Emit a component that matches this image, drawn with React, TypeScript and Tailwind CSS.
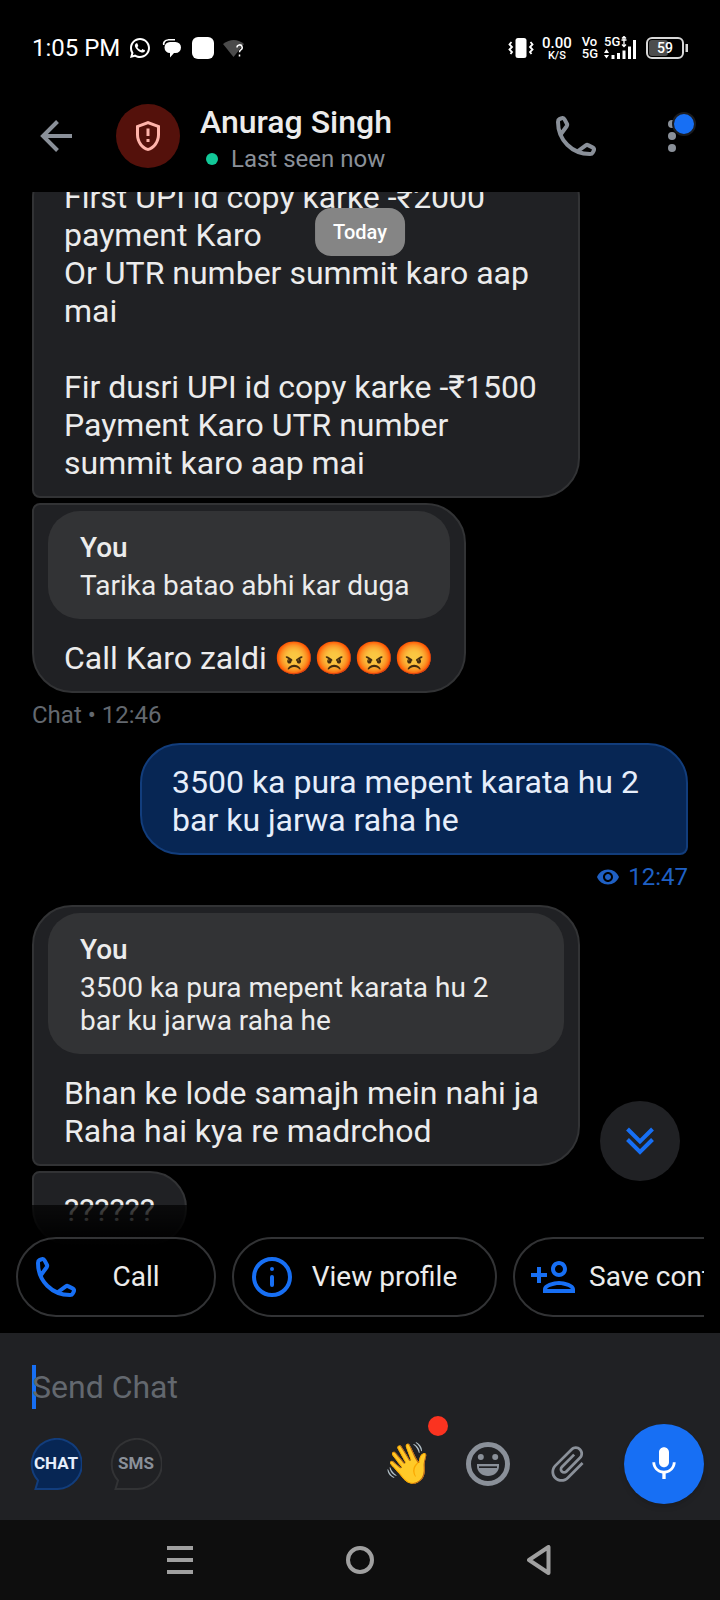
import { useState, type ReactNode } from 'react';
import { MdAttachFile, MdMic, MdOutlineGppMaybe, MdOutlinePersonAdd, MdVisibility } from 'react-icons/md';
import { RiWhatsappLine } from 'react-icons/ri';

interface Quote {
  author: string;
  text: string;
}

interface Message {
  id: number;
  mine?: boolean;
  text: string;
  quote?: Quote;
  meta?: string;
  shape: string;
}

const MESSAGES: Message[] = [
  {
    id: 1,
    text: 'First UPI id copy karke -₹2000\npayment Karo\nOr UTR number summit karo aap mai\n\nFir dusri UPI id copy karke -₹1500\nPayment Karo UTR number summit karo aap mai',
    shape: 'rounded-[40px] rounded-bl-lg',
  },
  {
    id: 2,
    text: 'Call Karo zaldi 😡😡😡😡',
    quote: { author: 'You', text: 'Tarika batao abhi kar duga' },
    meta: 'Chat • 12:46',
    shape: 'rounded-[40px] rounded-tl-lg',
  },
  {
    id: 3,
    mine: true,
    text: '3500 ka pura mepent karata hu 2 bar ku jarwa raha he',
    meta: '12:47',
    shape: 'rounded-[40px] rounded-br-lg',
  },
  {
    id: 4,
    text: 'Bhan ke lode samajh mein nahi ja Raha hai kya re madrchod',
    quote: { author: 'You', text: '3500 ka pura mepent karata hu 2 bar ku jarwa raha he' },
    shape: 'rounded-[40px] rounded-bl-lg',
  },
  { id: 5, text: '??????', shape: 'rounded-[40px] rounded-tl-lg' },
];

function PhoneIcon() {
  return (
    <svg width="40" height="40" viewBox="0 0 40 40" fill="none" stroke="currentColor" strokeWidth="4" strokeLinejoin="round">
      <path d="M5 18L10.7 10.2Q11.5 9 11 8L8.7 3.6Q7.5 1.4 5.2 2.3L3.4 3.1Q2 3.8 2 6C2 24 16 38 34 38Q36 38 36.7 36.6L37.7 34.8Q38.7 32.5 36.5 31.4L32 29.1Q31 28.5 29.8 29.3L22 35" />
    </svg>
  );
}

function StatusBar() {
  return (
    <div className="flex h-20 shrink-0 items-center justify-between pt-4 pr-[31px] pl-8 text-white">
      <div className="flex items-center gap-2">
        <span className="text-2xl">1:05 PM</span>
        <RiWhatsappLine size={24} />
        <svg width="24" height="22" viewBox="0 0 24 22" fill="currentColor">
          <path d="M3 8C2 4 6 2 10 2h5v1.600H10C6 3.600 4.500 5 4.500 8z" />
          <path d="M10 5h5.500a5.500 5.500 0 0 1 0 11H14l-4 4.500V16a5.500 5.500 0 0 1 0-11z" />
        </svg>
        <span className="size-[22px] rounded-md bg-white" />
        <svg width="24" height="20" viewBox="0 0 24 20">
          <path d="M1 6Q12-2 22 6L11.500 19z" fill="#4b4b4b" />
          <path d="M15 9.500a2.600 2.600 0 1 1 3.800 2.300q-1.300.7-1.300 2.400M17.500 16.500v2" fill="none" stroke="#fff" strokeWidth="1.500" />
        </svg>
      </div>
      <div className="flex items-center gap-2">
        <svg width="26" height="22" viewBox="0 0 26 22" fill="currentColor">
          <rect x="7.500" y="1" width="11" height="20" rx="2.500" />
          <path d="M3.500 5L1.500 7.500 4 10 1.500 12.500 4 15 2.500 17M22.500 5L24.500 7.500 22 10 24.500 12.500 22 15 23.500 17" fill="none" stroke="currentColor" strokeWidth="1.800" />
        </svg>
        <div className="flex flex-col items-center font-medium">
          <span className="text-[15px] leading-[14px]">0.00</span>
          <span className="text-[11px] leading-[11px]">K/S</span>
        </div>
        <div className="ml-[2px] flex items-center gap-[6px] font-medium">
          <div className="flex flex-col text-[13px] leading-3">
            <span>Vo</span>
            <span>5G</span>
          </div>
          <div className="relative h-6 w-8">
            <span className="absolute top-0 left-0 text-[13px] leading-3">5G</span>
            <svg className="absolute inset-0" width="32" height="24" viewBox="0 0 32 24" fill="currentColor">
              <path d="M18 2.500L20 .5 22 2.500M20 .5v10M17.500 4h5M18 8.500L20 10.500 22 8.500" fill="none" stroke="currentColor" strokeWidth="1.300" />
              <path d="M0 17l2.500-4 2.500 4zM0 19l2.500 3.500L5 19z" />
              <path d="M7.500 19h3v4h-3zM13 17h3v6h-3zM18.500 14.500h3V23h-3zM24 10.500h3V23h-3zM29 4h3v19h-3z" />
            </svg>
          </div>
        </div>
        <svg className="ml-[2px] overflow-visible" width="43" height="22" viewBox="0 0 43 22">
          <rect x="1" y="1" width="36" height="20" rx="5" fill="none" stroke="#d8d8d8" strokeWidth="2" />
          <rect x="3" y="3" width="19" height="16" rx="3" fill="#4d4d4d" />
          <path d="M39.500 7h2.500v8h-2.500z" fill="#d8d8d8" />
          <text x="19" y="16" textAnchor="middle" fill="#fff" fontSize="14" fontWeight="500">59</text>
        </svg>
      </div>
    </div>
  );
}

function Header() {
  return (
    <header className="flex h-28 shrink-0 items-center pr-6 pl-8 text-[#8a9099]">
      <button aria-label="Back" className="flex size-12 items-center justify-center">
        <svg width="32" height="32" viewBox="0 0 32 32" fill="none" stroke="currentColor" strokeWidth="4">
          <path d="M32 16H3M17.500 1.500L3 16l14.500 14.500" />
        </svg>
      </button>
      <div className="ml-9 flex size-16 shrink-0 items-center justify-center rounded-full bg-[#54110b] text-[#ffb4ab]">
        <MdOutlineGppMaybe size={36} />
      </div>
      <div className="ml-5 flex-1 pt-[7px]">
        <h1 className="text-[32px] leading-[38px] font-medium text-[#ececec]">Anurag Singh</h1>
        <p className="flex items-center gap-[13px] pl-[6px] text-2xl leading-9">
          <span className="size-3 rounded-full bg-[#12c898]" />
          Last seen now
        </p>
      </div>
      <button aria-label="Call" className="mr-[52px]">
        <PhoneIcon />
      </button>
      <button aria-label="More options" className="relative flex size-12 items-center justify-center">
        <svg width="8" height="32" viewBox="0 0 8 32" fill="currentColor">
          <circle cx="4" cy="4" r="4" />
          <circle cx="4" cy="16" r="4" />
          <circle cx="4" cy="28" r="4" />
        </svg>
        <span className="absolute top-0 right-0 size-6 rounded-full border-2 border-[#1b1c1f] bg-[#176ff4]" />
      </button>
    </header>
  );
}

function Bubble({ message }: { message: Message }) {
  const { mine, quote, meta } = message;
  return (
    <div className={mine ? 'flex flex-col items-end' : 'flex flex-col items-start'}>
      <div
        className={cn(
          'max-w-[548px] border-2',
          message.shape,
          mine ? 'border-[#123d7c] bg-[#072654] text-[#e6eefb]' : 'border-[#323335] bg-[#202124] text-[#ececec]'
        )}
      >
        {quote && (
          <blockquote className="mx-[14px] mt-[6px] rounded-[32px] bg-[#323335] px-8 pt-5 pb-[17px] text-[28px] leading-[33px]">
            <cite className="mb-[5px] block font-medium not-italic">{quote.author}</cite>
            <p>{quote.text}</p>
          </blockquote>
        )}
        <p className={cn('px-[30px] pb-[14px] text-[32px] leading-[38px] whitespace-pre-wrap', quote ? 'pt-5' : 'pt-[18px]')}>
          {message.text}
        </p>
      </div>
      {meta && (
        <div className={cn('mt-2 mb-[9px] flex h-7 items-center gap-2 text-2xl', mine ? 'text-[#1f60c4]' : 'text-[#63686f]')}>
          {mine && <MdVisibility size={24} />}
          <span>{meta}</span>
        </div>
      )}
    </div>
  );
}

function Chip({ icon, label, width }: { icon: ReactNode; label: string; width: string }) {
  return (
    <button className={cn('flex h-20 shrink-0 items-center gap-3 rounded-full border-2 border-[#323335] pr-[34px] pl-[14px] text-[#ececec]', width)}>
      <span className="flex size-12 shrink-0 items-center justify-center text-[#176ff4]">{icon}</span>
      <span className="flex-1 text-center text-[28px] whitespace-nowrap">{label}</span>
    </button>
  );
}

function ModeButton({ label, active, onClick }: { label: string; active: boolean; onClick: () => void }) {
  return (
    <button
      onClick={onClick}
      aria-pressed={active}
      className={cn('grid size-[52px] place-items-center text-[17px] font-bold', active ? 'text-[#e6eefb]' : 'text-[#8a9099]')}
    >
      <svg className="col-start-1 row-start-1" width="52" height="52" viewBox="0 0 52 52">
        <path
          d="M8 42.500A25 25 0 1 1 26 51H5.500z"
          fill={active ? '#072654' : 'none'}
          stroke={active ? '#123d7c' : '#323335'}
          strokeWidth="2"
        />
      </svg>
      <span className="col-start-1 row-start-1">{label}</span>
    </button>
  );
}

function Composer() {
  const [mode, setMode] = useState('CHAT');
  const [draft, setDraft] = useState('');

  return (
    <footer className="shrink-0 bg-[#202124] px-4 pt-8 pb-4">
      <div className="relative mb-[15px] px-4">
        {draft === '' && <span className="absolute top-0 left-4 h-11 w-1 bg-[#176ff4]" />}
        <input
          type="text"
          aria-label="Send Chat"
          placeholder="Send Chat"
          value={draft}
          onChange={(e) => setDraft(e.target.value)}
          className="relative block h-11 w-full bg-transparent text-[32px] text-[#ececec] outline-none placeholder:text-[#63686f]"
        />
      </div>
      <div className="flex h-20 items-center">
        <div className="ml-[14px] flex flex-1 gap-7">
          <ModeButton label="CHAT" active={mode === 'CHAT'} onClick={() => setMode('CHAT')} />
          <ModeButton label="SMS" active={mode === 'SMS'} onClick={() => setMode('SMS')} />
        </div>
        <div className="flex text-[#8a9099]">
          <button aria-label="Wave" className="relative flex size-20 items-center justify-center text-[40px] leading-[48px]">
            👋
            <span className="absolute -top-2 right-0 size-5 rounded-full bg-[#fb3320]" />
          </button>
          <button aria-label="Emoji" className="flex size-20 items-center justify-center">
            <svg width="44" height="44" viewBox="0 0 44 44" fill="currentColor">
              <circle cx="22" cy="22" r="19.500" fill="none" stroke="currentColor" strokeWidth="5" />
              <circle cx="14.800" cy="15" r="3" />
              <circle cx="29.200" cy="15" r="3" />
              <path d="M11 22h22v2c0 6-5 10-11 10s-11-4-11-10z" />
              <path d="M13 24.300h18v1.700H13z" fill="#202124" />
            </svg>
          </button>
          <button aria-label="Attach" className="flex size-20 items-center justify-center">
            <MdAttachFile size={44} className="rotate-45" />
          </button>
        </div>
        <button aria-label="Record voice message" className="ml-4 flex size-20 items-center justify-center rounded-full bg-[#176ff4] text-white shadow-md">
          <MdMic size={40} />
        </button>
      </div>
    </footer>
  );
}

function SystemNav() {
  return (
    <nav className="flex h-20 shrink-0 items-center justify-center bg-[#0e0e0e] text-[#a0a0a0]">
      <button aria-label="Recent apps" className="flex w-1/4 justify-center">
        <svg width="26" height="28" viewBox="0 0 26 28" fill="currentColor">
          <path d="M0 0h26v4H0zM0 12h26v4H0zM0 24h26v4H0z" />
        </svg>
      </button>
      <button aria-label="Home" className="flex w-1/4 justify-center">
        <svg width="28" height="28" viewBox="0 0 28 28" fill="none" stroke="currentColor" strokeWidth="4">
          <circle cx="14" cy="14" r="12" />
        </svg>
      </button>
      <button aria-label="Back" className="flex w-1/4 justify-center">
        <svg width="26" height="30" viewBox="0 0 26 30" fill="none" stroke="currentColor" strokeWidth="4" strokeLinejoin="round">
          <path d="M21.500 2v26L2 15z" />
        </svg>
      </button>
    </nav>
  );
}

export default function App() {
  return (
    <div className="flex h-screen flex-col bg-black font-['Roboto','Noto_Color_Emoji',sans-serif]">
      <StatusBar />
      <Header />

      <main className="relative flex min-h-0 flex-1 flex-col justify-end overflow-hidden">
        <div className="flex flex-col gap-[5px] px-8 pb-[88px]">
          {MESSAGES.map((message) => (
            <Bubble key={message.id} message={message} />
          ))}
        </div>

        {/* Date pill */}
        <div className="absolute top-4 left-1/2 flex h-12 -translate-x-1/2 items-center rounded-2xl bg-[#858585] px-[18px] text-xl font-medium text-white">
          Today
        </div>

        <button aria-label="Scroll to latest" className="absolute right-10 bottom-[152px] flex size-20 items-center justify-center rounded-full bg-[#202124] text-[#176ff4]">
          <svg width="28" height="28" viewBox="0 0 28 28" fill="none" stroke="currentColor" strokeWidth="4">
            <path d="M1.500 2L14 14.500 26.500 2M1.500 12.500L14 25l12.500-12.500" />
          </svg>
        </button>

        {/* Quick actions sit over the end of the thread */}
        <div className="absolute inset-x-0 bottom-0 bg-linear-to-b from-black/70 to-black to-[40px] px-4 pt-8 pb-4">
          <div className="flex gap-4 overflow-hidden">
            <Chip icon={<PhoneIcon />} label="Call" width="min-w-[200px]" />
            <Chip
              icon={
                <svg width="40" height="40" viewBox="0 0 40 40" fill="none" stroke="currentColor" strokeWidth="4">
                  <circle cx="20" cy="20" r="18" />
                  <path d="M20 20v8M20 12v.01" strokeLinecap="round" />
                </svg>
              }
              label="View profile"
              width="min-w-[265px]"
            />
            <Chip icon={<MdOutlinePersonAdd size={48} />} label="Save contact" width="min-w-[265px]" />
          </div>
        </div>
      </main>

      <Composer />
      <SystemNav />
    </div>
  );
}

function cn(...inputs: (string | false | undefined)[]) {
  return inputs.filter(Boolean).join(' ');
}
